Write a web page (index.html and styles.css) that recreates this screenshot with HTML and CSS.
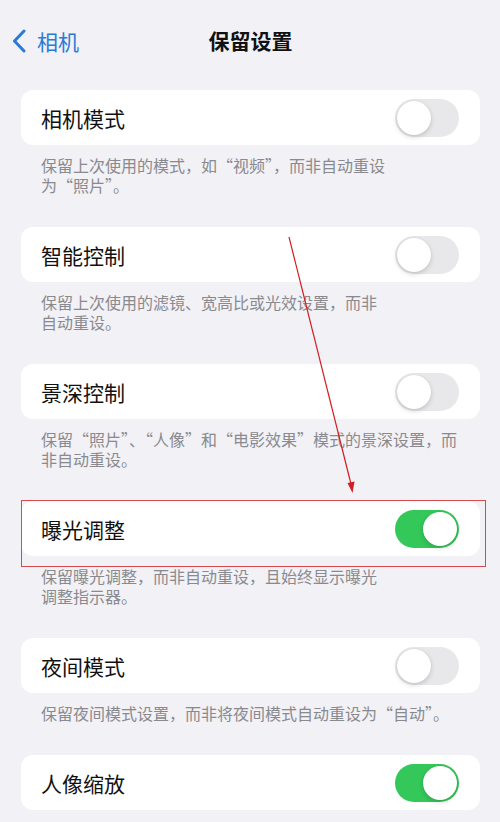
FILE: index.html
```html
<!DOCTYPE html>
<html lang="zh-CN">
<head>
<meta charset="utf-8">
<title>保留设置</title>
<link rel="stylesheet" href="styles.css">
</head>
<body>
<div class="screen">
  <header class="nav">
    <a class="back">
      <svg class="chev" width="14" height="24" viewBox="0 0 14 24"><path d="M12 2 L2.5 12 L12 22" fill="none" stroke="currentColor" stroke-width="3" stroke-linecap="round" stroke-linejoin="round"/></svg>
      <span>相机</span>
    </a>
    <h1 class="title">保留设置</h1>
  </header>

  <section class="group">
    <div class="cell"><span class="label">相机模式</span><span class="switch"></span></div>
    <p class="note"><span>保留上次使用的模式，如“视频”，而非自动重设</span><span>为“照片”。</span></p>
  </section>

  <section class="group">
    <div class="cell"><span class="label">智能控制</span><span class="switch"></span></div>
    <p class="note"><span>保留上次使用的滤镜、宽高比或光效设置，而非</span><span>自动重设。</span></p>
  </section>

  <section class="group">
    <div class="cell"><span class="label">景深控制</span><span class="switch"></span></div>
    <p class="note"><span>保留“照片”、“人像”和“电影效果”模式的景深设置，而</span><span>非自动重设。</span></p>
  </section>

  <section class="group">
    <div class="cell marked"><span class="label">曝光调整</span><span class="switch on"></span></div>
    <p class="note"><span>保留曝光调整，而非自动重设，且始终显示曝光</span><span>调整指示器。</span></p>
  </section>

  <section class="group">
    <div class="cell"><span class="label">夜间模式</span><span class="switch"></span></div>
    <p class="note"><span>保留夜间模式设置，而非将夜间模式自动重设为“自动”。</span></p>
  </section>

  <section class="group">
    <div class="cell"><span class="label">人像缩放</span><span class="switch on"></span></div>
  </section>

  <svg class="pointer" width="500" height="822" viewBox="0 0 500 822">
    <line x1="289" y1="237" x2="351" y2="484" stroke="#d21f25" stroke-width="1.2"/>
    <path d="M347.5 483 L352.5 493 L354.5 481.5 Z" fill="#d21f25"/>
  </svg>
</div>
</body>
</html>
```

FILE: styles.css
```css
* { box-sizing: border-box; }

html, body {
  margin: 0;
  padding: 0;
  background: #f1f1f6;
}

body {
  font-family: "Noto Sans CJK SC", "Noto Sans", sans-serif;
  color: #000;
}

.screen {
  position: relative;
  width: 500px;
  height: 822px;
  overflow: hidden;
  padding: 0 20px 0 21px;
}

.nav {
  position: relative;
  height: 90px;
  display: flex;
  align-items: flex-start;
  padding-top: 24px;
}

.back {
  display: flex;
  align-items: center;
  gap: 11px;
  margin-left: -9px;
  color: #2a7ad6;
  font-size: 21px;
  line-height: 34px;
}

.chev { display: block; }

.title {
  position: absolute;
  left: 0;
  right: 0;
  top: 23px;
  margin: 0;
  text-align: center;
  font-size: 21px;
  font-weight: 600;
  line-height: 34px;
  color: #111;
}

.group {
  margin-bottom: 32px;
}

.cell {
  position: relative;
  height: 55px;
  background: #fff;
  border-radius: 12px;
  display: flex;
  align-items: center;
  justify-content: space-between;
  padding: 0 21px 0 20px;
}

.label {
  font-size: 21px;
  line-height: 30px;
  padding-top: 1px;
  color: #111;
}

.switch {
  position: relative;
  width: 64px;
  height: 38px;
  border-radius: 19px;
  background: #e8e8ea;
  flex: none;
}

.switch::after {
  content: "";
  position: absolute;
  top: 2px;
  left: 2px;
  width: 34px;
  height: 34px;
  border-radius: 50%;
  background: #fff;
  box-shadow: 0 2px 5px rgba(0, 0, 0, 0.16), 0 0 1px rgba(0, 0, 0, 0.12);
}

.switch.on { background: #34c759; }
.switch.on::after { left: 28px; }

.marked::before {
  content: "";
  position: absolute;
  left: 0;
  top: -1px;
  width: 463px;
  height: 65px;
  border: 1.5px solid #d94a4f;
  pointer-events: none;
}

.note {
  margin: 0;
  padding: 10px 0 0 20px;
  font-size: 16px;
  color: #8a8a8e;
  white-space: nowrap;
}

/* each wrapped line is its own 20px row */
.note span {
  display: block;
  height: 20px;
  line-height: 20px;
}

.pointer {
  position: absolute;
  left: 0;
  top: 0;
  pointer-events: none;
}
```
